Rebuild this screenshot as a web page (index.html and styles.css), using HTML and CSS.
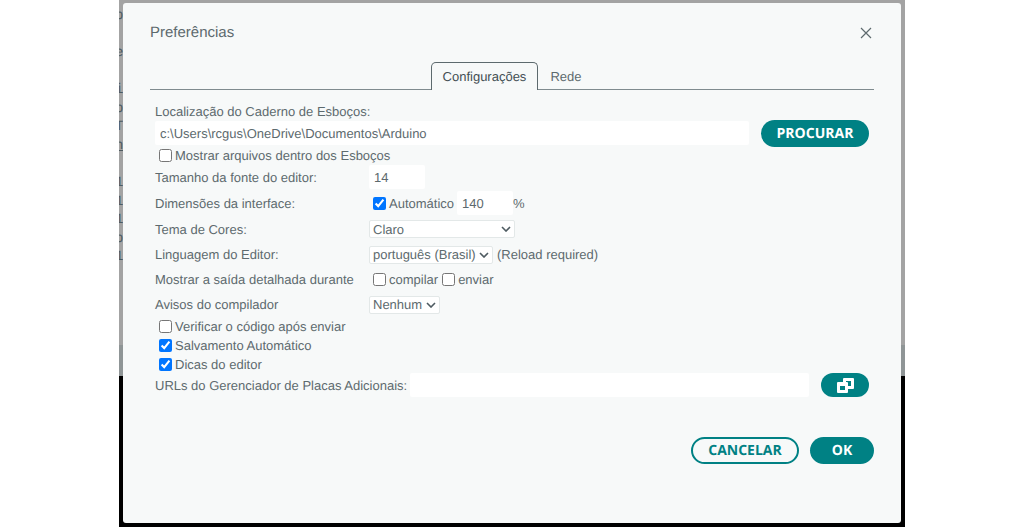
FILE: index.html
```html
<!DOCTYPE html>
<html lang="pt-BR">
  <head>
    <meta charset="UTF-8" />
    <title>Preferências</title>
    <link rel="stylesheet" href="styles.css">
  </head>

  <body>
    <div class="app">
      <div class="editor" aria-hidden="true">
        <span>p</span><span></span><span>e</span><span></span>
        <span>i</span><span>p</span><span>T</span><span class="editor__link">h</span>
        <span></span><span>1</span><span>1</span><span>1</span>
        <span>p</span><span>1</span>
      </div>

      <div class="dialog" role="dialog" aria-labelledby="title">
        <header class="dialog__head">
          <h1 class="dialog__title" id="title">Preferências</h1>
          <button class="dialog__close" type="button" aria-label="Fechar">
            <svg width="12" height="12" viewBox="0 0 12 12">
              <path d="M1 1L11 11M11 1L1 11" stroke="currentColor" stroke-width="1.2" fill="none" />
            </svg>
          </button>
        </header>

        <div class="tabs" role="tablist">
          <button class="tabs__item tabs__item--active" type="button" role="tab" aria-selected="true">Configurações</button>
          <button class="tabs__item" type="button" role="tab" aria-selected="false">Rede</button>
        </div>

        <form class="settings">
          <label class="line" for="sketchbook">Localização do Caderno de Esboços:</label>
          <div class="path">
            <input class="field field--grow" id="sketchbook" type="text" value="c:\Users\rcgus\OneDrive\Documentos\Arduino" />
            <button class="btn btn--browse" type="button">PROCURAR</button>
          </div>
          <label class="line"><input type="checkbox" />Mostrar arquivos dentro dos Esboços</label>

          <div class="options">
            <label for="font-size">Tamanho da fonte do editor:</label>
            <div class="options__value options__value--tall">
              <input class="field field--number" id="font-size" type="text" value="14" />
            </div>

            <label for="scale">Dimensões da interface:</label>
            <div class="options__value options__value--tall">
              <label class="check"><input type="checkbox" checked />Automático</label>
              <input class="field field--number field--scale" id="scale" type="text" value="140" />
              <span>%</span>
            </div>

            <label for="theme">Tema de Cores:</label>
            <div class="options__value options__value--tall">
              <div class="select">
                <select class="select__box select__box--theme" id="theme">
                  <option>Claro</option>
                </select>
                <svg class="select__arrow" width="10" height="6" viewBox="0 0 10 6">
                  <path d="M1 1L5 5L9 1" />
                </svg>
              </div>
            </div>

            <label for="language">Linguagem do Editor:</label>
            <div class="options__value">
              <div class="select">
                <select class="select__box" id="language">
                  <option>português (Brasil)</option>
                </select>
                <svg class="select__arrow" width="10" height="6" viewBox="0 0 10 6">
                  <path d="M1 1L5 5L9 1" />
                </svg>
              </div>
              <span class="options__note">(Reload required)</span>
            </div>

            <span>Mostrar a saída detalhada durante</span>
            <div class="options__value">
              <label class="check"><input type="checkbox" />compilar</label>
              <label class="check"><input type="checkbox" />enviar</label>
            </div>

            <label for="warnings">Avisos do compilador</label>
            <div class="options__value">
              <div class="select">
                <select class="select__box" id="warnings">
                  <option>Nenhum</option>
                </select>
                <svg class="select__arrow" width="10" height="6" viewBox="0 0 10 6">
                  <path d="M1 1L5 5L9 1" />
                </svg>
              </div>
            </div>
          </div>

          <div class="checks">
            <label class="line"><input type="checkbox" />Verificar o código após enviar</label>
            <label class="line"><input type="checkbox" checked />Salvamento Automático</label>
            <label class="line"><input type="checkbox" checked />Dicas do editor</label>
          </div>

          <div class="urls">
            <label for="urls">URLs do Gerenciador de Placas Adicionais:</label>
            <input class="field field--grow field--urls" id="urls" type="text" />
            <button class="btn btn--icon" type="button" aria-label="Abrir lista de URLs">
              <svg width="17" height="15" viewBox="0 0 17 15">
                <rect x="6" width="11" height="11" rx="1" fill="#fff" />
                <rect x="9" y="3" width="5" height="5" fill="#008184" />
                <rect y="4" width="11" height="11" rx="1" fill="#fff" />
                <rect x="3" y="8" width="5" height="4" fill="#008184" />
              </svg>
            </button>
          </div>
        </form>

        <footer class="dialog__foot">
          <button class="btn btn--outline" type="button">CANCELAR</button>
          <button class="btn btn--ok" type="button">OK</button>
        </footer>
      </div>
    </div>
  </body>
</html>
```

FILE: styles.css
```css
* {
  box-sizing: border-box;
}

body {
  margin: 0;
  background-color: #fff;
  color: #5d6a6e;
  font-family: "Liberation Sans", Arial, sans-serif;
  font-size: 13px;
  text-rendering: geometricPrecision;
}

button,
input,
select {
  color: inherit;
  font: inherit;
  text-rendering: inherit;
}

.app {
  position: relative;
  display: flex;
  max-width: 786px;
  min-height: 100vh;
  margin: 0 auto;
  padding: 3px 4px 4px;
  background: linear-gradient(#a3a3a3 345px, #8f9596 345px, #8f9596 376px, #000 376px);
}

/* code that shows at the edge of the dialog */
.editor {
  position: absolute;
  top: 7px;
  left: 0;
  display: grid;
  grid-auto-rows: 1fr;
  width: 4px;
  height: 260px;
  overflow: hidden;
  color: #4e5b61;
  font-family: "Liberation Mono", monospace;
  font-size: 14px;
  line-height: 18px;
  text-indent: -4px;
}

.editor__link {
  text-decoration: underline;
}

.dialog {
  position: relative;
  flex: 1;
  padding: 16px 27px;
  border-radius: 3px;
  background-color: #f7f9f9;
}

.dialog__head {
  display: flex;
  align-items: center;
  justify-content: space-between;
  height: 27px;
}

.dialog__title {
  margin: 0;
  font-size: 15px;
  font-weight: normal;
}

.dialog__close {
  display: flex;
  padding: 2px;
  border: 0;
  background: none;
}

.tabs {
  display: flex;
  justify-content: center;
  margin-top: 16px;
  border-bottom: 1px solid #7f8b8f;
}

.tabs__item {
  height: 28px;
  margin-bottom: -1px;
  padding: 0 11px;
  border: 1px solid transparent;
  border-bottom: 0;
  border-radius: 5px 5px 0 0;
  background: none;
}

.tabs__item--active {
  border-color: #5d6a6e;
  background-color: #f7f9f9;
  color: #434f54;
}

.settings {
  padding: 12px 5px 0;
}

.line,
.check {
  display: flex;
  align-items: center;
}

.line {
  height: 18px;
}

input[type="checkbox"] {
  margin: 0 3px 0 4px;
}

.field {
  height: 24px;
  padding: 0 5px;
  border: 0;
  border-radius: 2px;
  background-color: #fff;
}

.field--grow {
  flex: 1;
  min-width: 0;
}

.field--number {
  width: 56px;
}

.field--scale {
  margin-left: 3px;
}

.field--urls {
  margin-left: 3px;
}

.path,
.urls {
  display: flex;
  align-items: center;
}

.path {
  height: 26px;
}

.options {
  display: grid;
  grid-template-columns: 214px 1fr;
  align-items: center;
}

.options__value {
  display: flex;
  align-items: center;
  height: 25px;
}

.options__value--tall {
  height: 26px;
}

.options__note {
  margin-left: 4px;
}

.select {
  position: relative;
  display: flex;
}

.select__box {
  height: 18px;
  padding: 0 16px 0 3px;
  border: 1px solid #e3e8e8;
  border-radius: 2px;
  background-color: #fff;
  appearance: none;
}

.select__box--theme {
  width: 146px;
}

.select__arrow {
  position: absolute;
  top: 6px;
  right: 4px;
  fill: none;
  stroke: #4e5b61;
  stroke-width: 1.6;
  pointer-events: none;
}

.checks {
  display: grid;
  gap: 1px;
}

.btn {
  display: flex;
  align-items: center;
  justify-content: center;
  height: 27px;
  padding: 0 14px;
  border: 0;
  border-radius: 14px;
  background-color: #008184;
  color: #fff;
  font-family: "Open Sans", sans-serif;
  font-size: 14px;
  font-weight: bold;
}

.btn--browse,
.btn--icon {
  margin-left: 12px;
}

.btn--browse {
  min-width: 108px;
}

.btn--icon {
  width: 48px;
  height: 24px;
}

.btn--outline {
  min-width: 108px;
  border: 2px solid #008184;
  background: none;
  color: #008184;
}

.btn--ok {
  min-width: 64px;
}

.dialog__foot {
  display: flex;
  justify-content: flex-end;
  gap: 11px;
  margin-top: 40px;
}
```
